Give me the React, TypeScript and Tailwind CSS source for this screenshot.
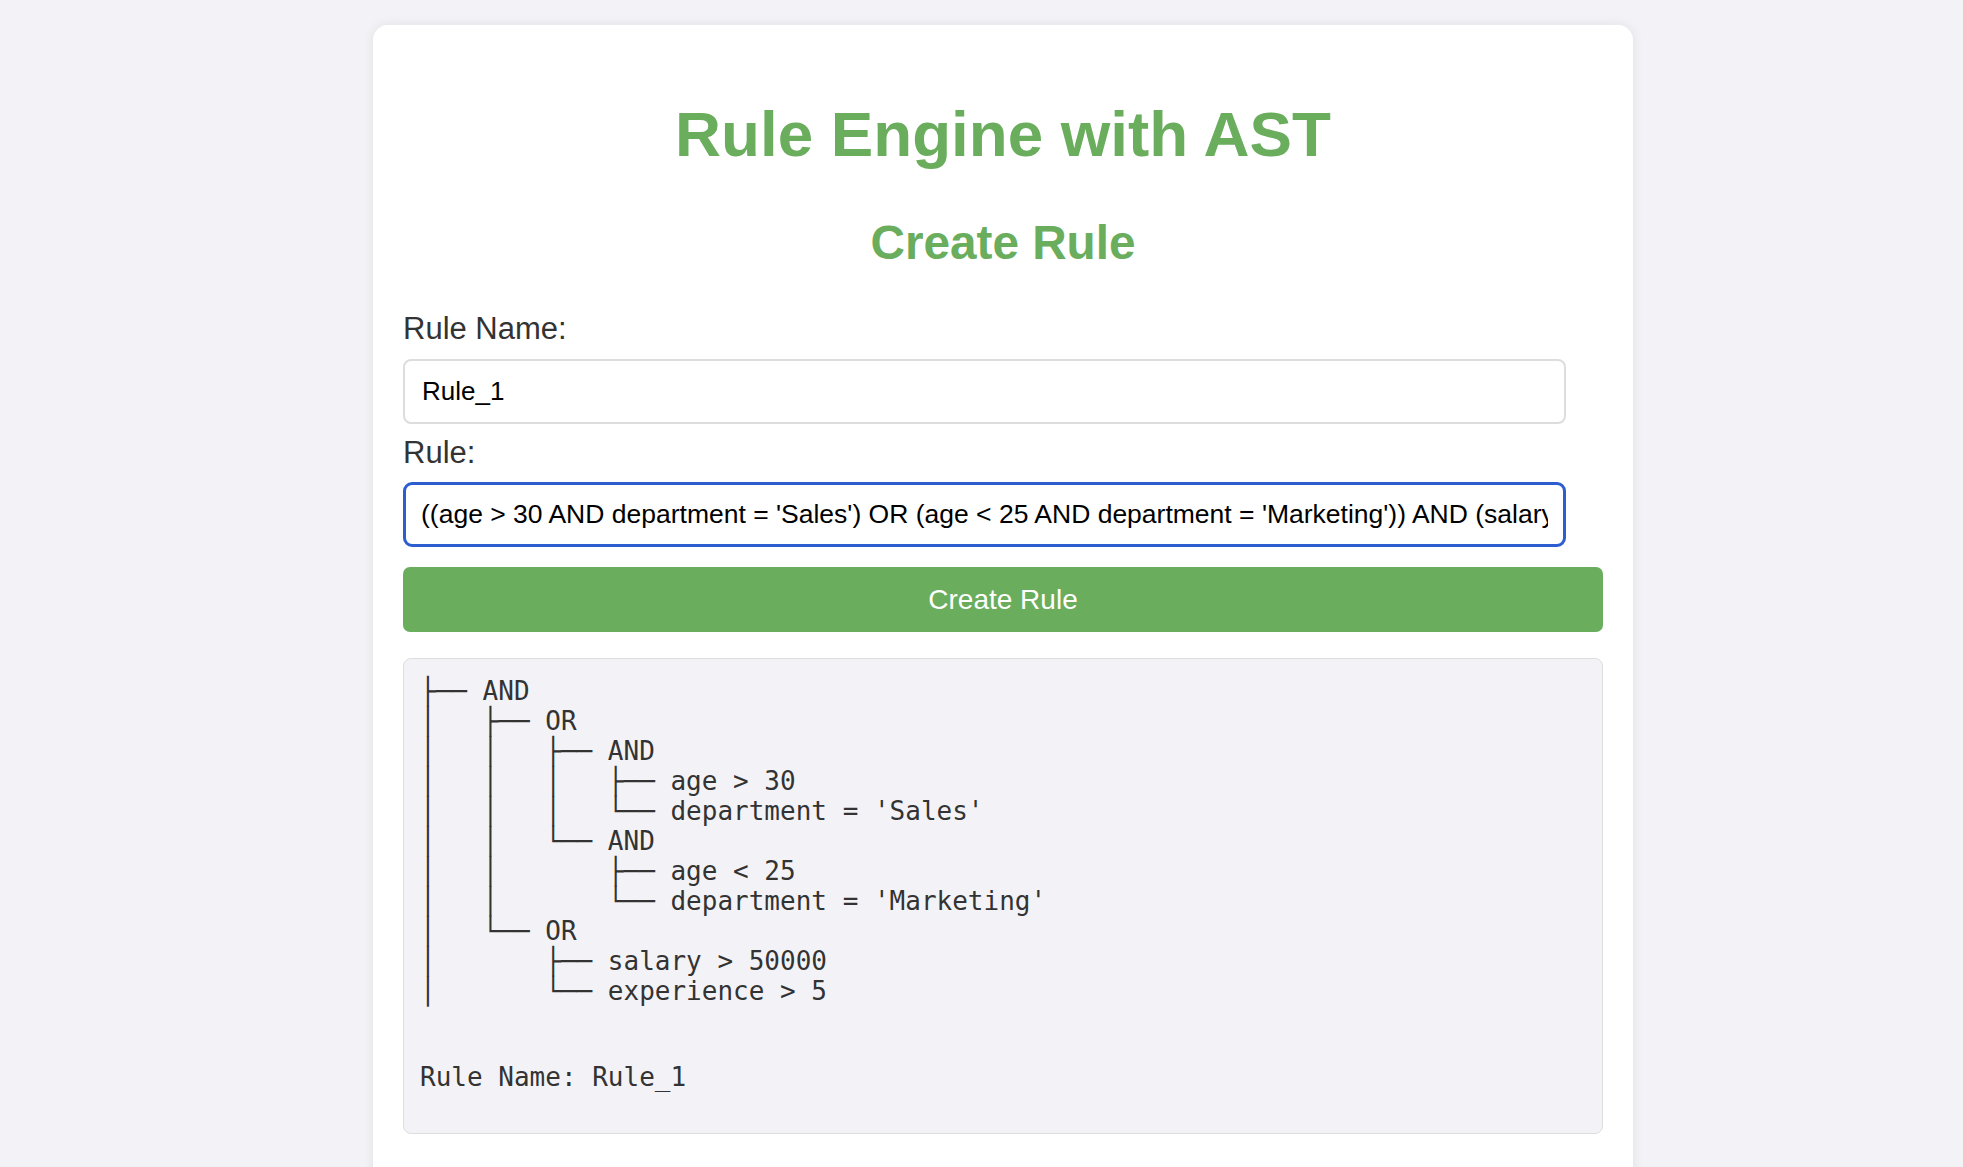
import React from "react";

const tree = [
  "├── AND",
  "│   ├── OR",
  "│   │   ├── AND",
  "│   │   │   ├── age > 30",
  "│   │   │   └── department = 'Sales'",
  "│   │   └── AND",
  "│   │       ├── age < 25",
  "│   │       └── department = 'Marketing'",
  "│   └── OR",
  "│       ├── salary > 50000",
  "│       └── experience > 5",
].join("\n");

export default function App() {
  return (
    <div
      className="min-h-screen w-full bg-[#f3f3f7] pt-[25px] pb-[40px] overflow-hidden"
      style={{ fontFamily: '"Liberation Sans", Arial, sans-serif' }}
    >
      <div className="ml-[373px] w-[1260px] rounded-[15px] bg-white px-[30px] pt-[77px] pb-[60px] shadow-[0_0_12px_rgba(0,0,0,0.08)]">
        <h1 className="m-0 text-center text-[63.7px] leading-[63px] font-bold text-[#69ad5d]">
          Rule Engine with AST
        </h1>
        <h2 className="mt-[54px] text-center text-[47.7px] leading-[47.5px] font-bold text-[#69ad5d]">
          Create Rule
        </h2>
        <div className="mt-[46px] text-[31px] leading-[31px] text-[#333333]">Rule Name:</div>
        <input
          type="text"
          defaultValue="Rule_1"
          className="mt-[15px] block h-[65px] w-[1163px] rounded-[8px] border-[2px] border-[#dddddd] bg-white px-[17px] text-[26px] text-black outline-none"
          style={{ fontFamily: '"Liberation Sans", Arial, sans-serif' }}
        />
        <div className="mt-[13.5px] text-[31px] leading-[31px] text-[#333333]">Rule:</div>
        <input
          type="text"
          defaultValue="((age > 30 AND department = 'Sales') OR (age < 25 AND department = 'Marketing')) AND (salary > 50000 OR experience > 5)"
          className="mt-[14px] block h-[65px] w-[1163px] rounded-[9px] border-[3.5px] border-[#2c5ecf] bg-white px-[15px] text-[26.5px] text-black outline-none"
          style={{ fontFamily: '"Liberation Sans", Arial, sans-serif' }}
        />
        <button className="mt-[20px] block h-[65px] w-full rounded-[7px] bg-[#69ad5d] text-[28px] text-white">
          Create Rule
        </button>
        <div
          className="mt-[26px] h-[476px] w-full rounded-[8px] border-[1.5px] border-[#dddddd] bg-[#f3f3f7] pl-[16px] pt-[17px] text-[26px] text-[#333333]"
          style={{ fontFamily: '"DejaVu Sans Mono", monospace' }}
        >
          <div className="whitespace-pre leading-[30.05px]">{tree}</div>
          <div className="mt-[55px] whitespace-pre leading-[30.05px]">Rule Name: Rule_1</div>
        </div>
      </div>
    </div>
  );
}
